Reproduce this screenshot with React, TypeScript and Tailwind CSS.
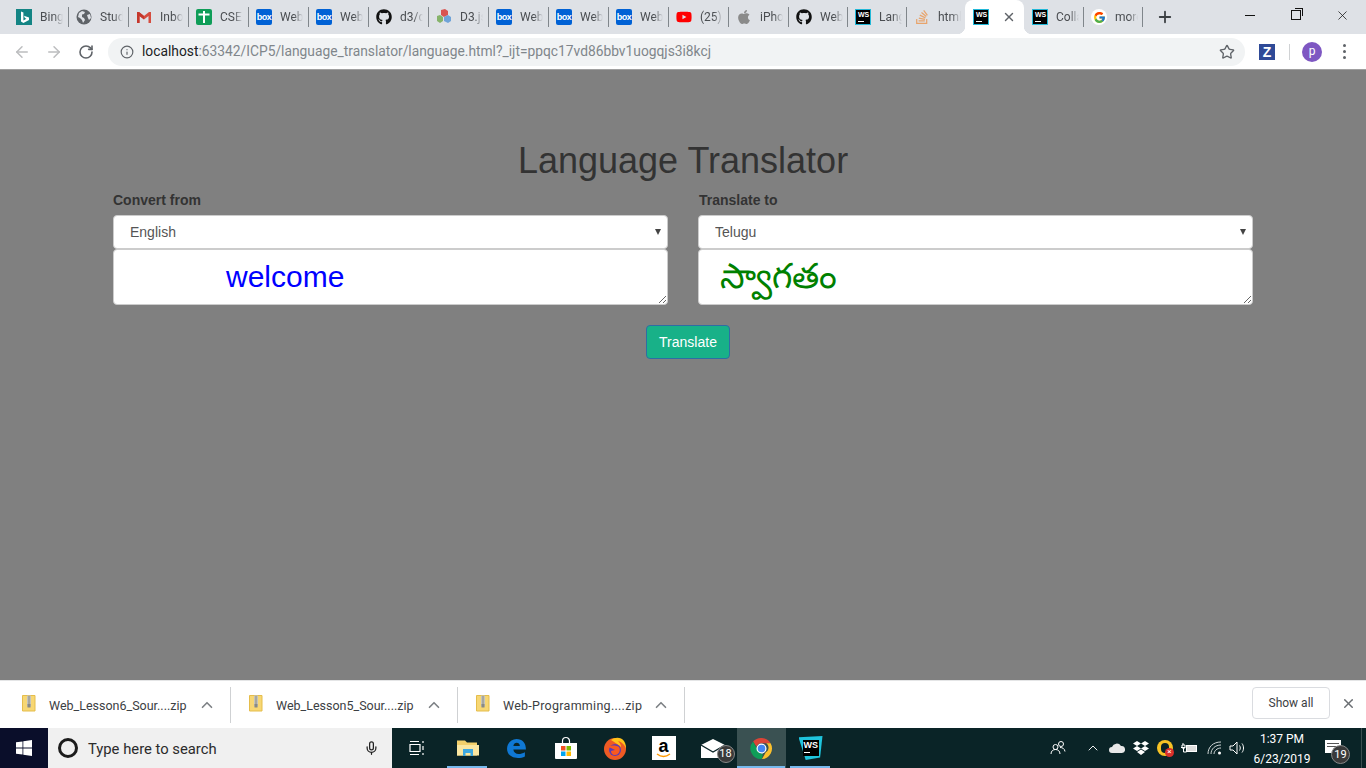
import React from "react";
import { ArrowLeft, ArrowRight, RotateCw, Info, Star, X, Plus, ChevronUp, Mic } from "lucide-react";
import { FaGithub, FaApple, FaStackOverflow, FaYoutube } from "react-icons/fa";
import { FcGoogle } from "react-icons/fc";

const Bing = () => (
  <div className="w-4 h-4 bg-[#138484] flex items-center justify-center">
    <svg viewBox="0 0 16 16" className="w-4 h-4"><path d="M5 2.500l2.400.9v8l3-1.700-1.500-.7-.9-2.300 5 1.700v2.600L7.400 14 5 12.600z" fill="#fff" /></svg>
  </div>
);
const Globe = () => (
  <svg viewBox="0 0 16 16" className="w-4 h-4"><circle cx="8" cy="8" r="7.500" fill="#5f6368" /><path d="M3 4l3-2 3 1-1 2-2 .5L6 8l2 1 1 2-2 3-1-3-2-2-2-1zM11 6l3-1 1 4-2 2-1-2z" fill="#dee1e6" /></svg>
);
const Gmail = () => (
  <svg viewBox="0 0 16 16" className="w-4 h-4"><path d="M1 3h2l5 4 5-4h2v11h-2.500V7L8 10.500 3.500 7v7H1z" fill="#d54c3f" /><path d="M3.500 7v7H1V3h2l5 4v3.500z" fill="#c5372c" /></svg>
);
const Sheet = () => (
  <svg viewBox="0 0 16 16" className="w-4 h-4"><rect width="16" height="16" rx="2" fill="#0f9d58" /><path d="M2.500 5.500h11M8 2v12" stroke="#fff" strokeWidth="2" /></svg>
);
const BoxIcon = () => (
  <div className="w-4 h-4 bg-[#0061d5] rounded-[2px] flex items-center justify-center text-white text-[9px] font-bold leading-none tracking-[-0.5px] font-['Liberation_Sans',sans-serif]">box</div>
);
const Cubes = () => (
  <svg viewBox="0 0 16 16" className="w-4 h-4"><path d="M5 1l4-1 3 2v4l-4 2-3-2z" fill="#d9534f" /><path d="M1 7l3-1 3 2v4l-3 2-3-2z" fill="#86b36a" /><path d="M8 8l4-2 3 2v4l-3 2-4-2z" fill="#6fa3d8" /></svg>
);
const WS = () => (
  <div className="w-4 h-4 bg-black border border-[#22b8d8] flex flex-col items-start pl-[2px] pt-[1px] text-white text-[7px] font-bold leading-[8px] font-['Liberation_Sans',sans-serif]">
    <span>WS</span>
    <div className="w-[6px] h-px bg-white mt-[2px]" />
  </div>
);

const tabs: { icon: React.ReactNode; label: string; w: string }[] = [
  { icon: <Bing />, label: "Bing", w: "w-[60px]" },
  { icon: <Globe />, label: "Study", w: "w-[60px]" },
  { icon: <Gmail />, label: "Inbox", w: "w-[60px]" },
  { icon: <Sheet />, label: "CSE", w: "w-[60px]" },
  { icon: <BoxIcon />, label: "Web", w: "w-[60px]" },
  { icon: <BoxIcon />, label: "Web", w: "w-[60px]" },
  { icon: <FaGithub className="w-4 h-4 text-[#111]" />, label: "d3/d3", w: "w-[60px]" },
  { icon: <Cubes />, label: "D3.js", w: "w-[60px]" },
  { icon: <BoxIcon />, label: "Web", w: "w-[60px]" },
  { icon: <BoxIcon />, label: "Web", w: "w-[60px]" },
  { icon: <BoxIcon />, label: "Web", w: "w-[60px]" },
  { icon: <FaYoutube className="w-4 h-4 text-[#f00]" />, label: "(25)", w: "w-[60px]" },
  { icon: <FaApple className="w-4 h-4 text-[#8a8a8a]" />, label: "iPhone", w: "w-[60px]" },
  { icon: <FaGithub className="w-4 h-4 text-[#111]" />, label: "Web", w: "w-[59px]" },
  { icon: <WS />, label: "Lang", w: "w-[59px]" },
];
const tabsAfter: { icon: React.ReactNode; label: string; sep: boolean }[] = [
  { icon: <WS />, label: "Collab", sep: true },
  { icon: <div className="w-4 h-4 rounded-full bg-white flex items-center justify-center"><FcGoogle className="w-[13px] h-[13px]" /></div>, label: "more", sep: true },
];

const Tab = ({ icon, label, w, sep = true }: { icon: React.ReactNode; label: string; w: string; sep?: boolean }) => (
  <div className={`${w} h-[34px] shrink-0 flex items-center pl-2 relative`}>
    <div className="w-4 h-4 shrink-0">{icon}</div>
    <div className="ml-2 w-[23px] overflow-hidden whitespace-nowrap text-[12px] text-[#4a4d51] [mask-image:linear-gradient(to_right,#000_60%,transparent)]">{label}</div>
    {sep && <div className="absolute -right-px top-[7px] h-[20px] w-px bg-[#80868b]" />}
  </div>
);

const Zip = () => (
  <svg viewBox="0 0 14 17" className="w-[14px] h-[17px]">
    <path d="M0.500 0.500h12.500v15.500H0.500z" fill="#f7d774" stroke="#e5bd4b" />
    <rect x="5" y="0.500" width="4" height="11" fill="#c4c4bc" />
    <path d="M6 2h2M6 4h2M6 6h2M6 8h2" stroke="#8a8a84" />
    <rect x="5.500" y="9" width="3" height="3.500" fill="#8a8a84" />
  </svg>
);

const Download = ({ name, wide = false }: { name: string; wide?: boolean }) => (
  <div className="w-[227px] h-[36px] flex items-center border-r border-[#cfd1d3] shrink-0">
    <div className="ml-[18px] -mt-[2px] w-[14px] h-[17px]"><Zip /></div>
    <div className={`ml-[13px] mt-[4px] text-[12.500px] text-[#3c4043] whitespace-nowrap ${wide ? "tracking-[0.27px]" : ""}`}>{name}</div>
    <ChevronUp className="ml-auto mr-[14px] w-[18px] h-[18px] text-[#7d8185]" strokeWidth={2.2} />
  </div>
);

const Cell = ({ children, active = false, bar = false }: { children: React.ReactNode; active?: boolean; bar?: boolean }) => (
  <div className={`w-[49px] h-10 shrink-0 flex items-center justify-center relative ${active ? "bg-[#3a5152]" : ""}`}>
    {children}
    {bar && <div className={`absolute bottom-0 h-[2px] bg-[#76b9ed] ${active ? "left-0 right-px" : "left-[4px] right-[5px]"}`} />}
  </div>
);

const Select = ({ value }: { value: string }) => (
  <div className="relative">
    <select defaultValue={value} className="appearance-none block w-full h-[34px] bg-white border border-[#cccccc] rounded-[4px] pl-4 pr-4 text-[14px] text-[#555555] outline-none">
      <option>{value}</option>
    </select>
    <div className="absolute right-[7px] top-[14px] w-0 h-0 border-l-[3px] border-r-[3px] border-t-[6px] border-l-transparent border-r-transparent border-t-[#444444] pointer-events-none" />
  </div>
);

export default function App() {
  return (
    <div className="w-[1366px] h-[768px] overflow-hidden flex flex-col font-['Liberation_Sans',Arial,sans-serif] bg-[#808080]">
      {/* tab strip */}
      <div className="h-[34px] shrink-0 bg-[#dee1e6] flex items-start pl-2 font-['Roboto',sans-serif]">
        {tabs.map((t, i) => (
          <Tab key={i} icon={t.icon} label={t.label} w={t.w} />
        ))}
        <Tab icon={<FaStackOverflow className="w-4 h-4 text-[#e8a46c]" />} label="html" w="w-[59px]" sep={false} />
        <div className="w-[59px] h-[34px] shrink-0 bg-white rounded-t-[8px] flex items-center pl-2 justify-between pr-2 relative before:content-[''] before:absolute before:-left-2 before:bottom-0 before:w-2 before:h-2 before:bg-[radial-gradient(circle_at_0_0,transparent_8px,#fff_8.500px)] after:content-[''] after:absolute after:-right-2 after:bottom-0 after:w-2 after:h-2 after:bg-[radial-gradient(circle_at_100%_0,transparent_8px,#fff_8.500px)]">
          <div className="w-4 h-4"><WS /></div>
          <X className="w-[14px] h-[14px] text-[#5f6368]" strokeWidth={2.4} />
        </div>
        {tabsAfter.map((t, i) => (
          <Tab key={i} icon={t.icon} label={t.label} w="w-[59px]" sep={t.sep} />
        ))}
        <Plus className="ml-[14px] mt-[8px] w-[18px] h-[18px] text-[#3c4043]" strokeWidth={2.4} />
        <div className="ml-auto mr-px flex items-start h-[30px] text-[#222]">
          <div className="w-[46px] h-[30px] flex items-center justify-center"><div className="w-[10px] h-px bg-[#111]" /></div>
          <div className="w-[46px] h-[30px] flex items-center justify-center">
            <div className="w-[10px] h-[10px] border border-[#111] relative bg-[#dee1e6] before:content-[''] before:absolute before:w-[8px] before:h-[8px] before:border-t before:border-r before:border-[#111] before:-top-[3px] before:-right-[3px]" />
          </div>
          <div className="w-[46px] h-[30px] flex items-center justify-center"><X className="w-[15px] h-[15px] text-[#111]" strokeWidth={1.2} /></div>
        </div>
      </div>
      {/* toolbar */}
      <div className="h-[36px] shrink-0 bg-white border-b border-[#a0a0a0] flex items-center font-['Roboto',sans-serif]">
        <ArrowLeft className="ml-[13px] w-[18px] h-[18px] text-[#bcbdbf]" strokeWidth={2} />
        <ArrowRight className="ml-[14px] w-[18px] h-[18px] text-[#bcbdbf]" strokeWidth={2} />
        <RotateCw className="ml-[15px] w-[16px] h-[16px] text-[#5f6368]" strokeWidth={2.4} />
        <div className="ml-[14px] w-[1137px] h-[28px] rounded-full bg-[#f1f3f4] flex items-center pl-3 pr-[10px]">
          <Info className="w-[14px] h-[14px] text-[#5f6368]" strokeWidth={2} />
          <div className="ml-2 text-[13.800px] whitespace-nowrap text-[#80868b]"><span className="text-[#202124]">localhost</span>:63342/ICP5/language_translator/language.html?_ijt=ppqc17vd86bbv1uogqjs3i8kcj</div>
          <Star className="ml-auto w-4 h-4 text-[#5f6368]" strokeWidth={2} />
        </div>
        <div className="ml-[14px] w-4 h-4 bg-[#2f4a97] text-white text-[14px] font-bold leading-4 text-center font-['Liberation_Sans',sans-serif]">Z</div>
        <div className="ml-[14px] w-px h-4 bg-[#d0d2d4]" />
        <div className="ml-[12px] w-5 h-5 rounded-full bg-[#7e57c2] text-white text-[12px] leading-[19px] text-center">p</div>
        <div className="ml-[21px] flex flex-col gap-[3px]">
          <div className="w-[3px] h-[3px] rounded-full bg-[#5f6368]" />
          <div className="w-[3px] h-[3px] rounded-full bg-[#5f6368]" />
          <div className="w-[3px] h-[3px] rounded-full bg-[#5f6368]" />
        </div>
      </div>
      {/* page */}
      <main className="flex-1 bg-[#808080] text-[#333333] overflow-hidden">
        <h1 className="mt-[71px] text-center text-[36px] leading-[40px] font-normal">Language Translator</h1>
        <div className="mt-[9px] w-[1170px] mx-auto grid grid-cols-2">
          <div className="px-[15px]">
            <label className="block text-[14px] font-bold leading-[20px] mb-[5px]">Convert from</label>
            <Select value="English" />
            <textarea readOnly defaultValue="welcome" className="block w-full h-[56px] bg-white border border-[#cccccc] rounded-[4px] pl-[112px] pt-[9px] text-[30px] leading-[36px] text-[#0000ff] outline-none" />
          </div>
          <div className="px-[15px]">
            <label className="block pl-px text-[14px] font-bold leading-[20px] mb-[5px]">Translate to</label>
            <Select value="Telugu" />
            <textarea readOnly defaultValue="స్వాగతం" className="block w-full h-[56px] bg-white border border-[#cccccc] rounded-[4px] pl-[21px] pt-[6px] text-[35px] leading-[40px] text-[#008000] outline-none" />
          </div>
        </div>
        <div className="mt-[20px] pl-[646px]">
          <button className="w-[84px] h-[34px] bg-[#18b188] border border-[#2e6da4] rounded-[4px] text-white text-[14px]">Translate</button>
        </div>
      </main>
      {/* downloads */}
      <div className="h-[48px] shrink-0 bg-white border-t border-[#e4e5e6] flex items-center pl-[4px] font-['Roboto',sans-serif]">
        <Download name="Web_Lesson6_Sour....zip" />
        <Download name="Web_Lesson5_Sour....zip" />
        <Download name="Web-Programming....zip" wide />
        <div className="ml-auto mr-[10px] -mt-[3px] flex items-center">
          <div className="w-[78px] h-[32px] border border-[#dadce0] rounded-[4px] text-[12px] text-[#3c4043] flex items-center justify-center">Show all</div>
          <X className="ml-[11px] w-[15px] h-[15px] text-[#6a6e72]" strokeWidth={2.4} />
        </div>
      </div>
      {/* taskbar */}
      <div className="h-10 shrink-0 bg-[#0a2427] flex items-center text-white font-['Roboto',sans-serif]">
        <div className="w-12 h-10 bg-[#0a0e2a] flex items-center justify-center">
          <svg viewBox="0 0 16 16" className="w-4 h-4"><path d="M0 2.300l6.500-.9v6.200H0zM7.300 1.300L16 0v7.600H7.300zM0 8.400h6.500v6.200L0 13.700zM7.300 8.400H16V16l-8.700-1.300z" fill="#fff" /></svg>
        </div>
        <div className="w-[344px] h-10 bg-[#f0f0f0] flex items-center pl-[10px] pr-[13px] text-[#2b2b2b]">
          <div className="w-[20px] h-[20px] rounded-full border-[3px] border-[#1c1c1c]" />
          <span className="ml-[10px] mt-[2px] text-[14.800px]">Type here to search</span>
          <Mic className="ml-auto w-[15px] h-[18px] text-[#222]" strokeWidth={2} />
        </div>
        <div className="mr-[2px]">
          <Cell>
            <svg viewBox="0 0 16 16" className="w-4 h-4" fill="none" stroke="#fff" strokeWidth="1.200"><path d="M1 1.500h9M1 14.500h9M1 4.500h10v7H1zM14 1v2M14 6v4M14 13v2" /></svg>
          </Cell>
        </div>
        <Cell bar>
          <svg viewBox="0 0 22 18" className="w-[22px] h-[18px]"><path d="M0 1.500h8l2 2h10v13H0z" fill="#f3d06b" /><path d="M0 6h22v10.500H0z" fill="#fbe7a1" /><path d="M6 10h10v7h-2.500v-3h-5v3H6z" fill="#3fa9e0" /></svg>
        </Cell>
        <Cell>
          <svg viewBox="0 0 20 20" className="w-[21px] h-[21px]"><path d="M10 1c5.500 0 9 3.700 9 10H7c.3 2.800 2.300 4.300 5 4.300 2 0 4-.6 6-1.700v4c-2 1.100-4.300 1.500-6.600 1.500C5.400 19.100 1 15.700 1 10.200 1 5 5 1 10 1zm-3 6.500h6.200c-.1-2-1.400-3-3-3S7.400 5.500 7 7.500z" fill="#0f78d4" /></svg>
        </Cell>
        <Cell>
          <svg viewBox="0 0 24 24" className="w-[24px] h-[24px]"><path d="M8.500 7V5a3.500 3.500 0 017 0v2" fill="none" stroke="#fff" strokeWidth="1.200" /><path d="M1 7h22v15a1 1 0 01-1 1H2a1 1 0 01-1-1z" fill="#fff" /><rect x="7" y="10" width="4.500" height="4.500" fill="#f25022" /><rect x="12.500" y="10" width="4.500" height="4.500" fill="#7fba00" /><rect x="7" y="15.500" width="4.500" height="4.500" fill="#00a4ef" /><rect x="12.500" y="15.500" width="4.500" height="4.500" fill="#ffb900" /></svg>
        </Cell>
        <Cell>
          <svg viewBox="0 0 24 24" className="w-[24px] h-[24px]"><circle cx="12" cy="13" r="11" fill="#ee5a24" /><path d="M8 4c4-3 10-3 13 1 2 3 2 6 2 8-1-4-4-7-8-8 2 2 3 4 3 6-3-3-7-5-10-7z" fill="#ffc21a" /><circle cx="12" cy="14" r="6" fill="#5b3bb5" /><path d="M5 11c3-2 8-2 11 0 2 3 0 8-4 8-3 0-4-2-4-4l4-1-4-2z" fill="#f9591f" /></svg>
        </Cell>
        <Cell>
          <div className="w-6 h-6 bg-white relative flex items-start justify-center text-black text-[18px] font-bold leading-[20px] font-['Liberation_Sans',sans-serif]">
            a
            <svg viewBox="0 0 16 5" className="absolute left-[4px] bottom-[2px] w-4 h-[5px]"><path d="M1 1c4 3 9 3 13 0" fill="none" stroke="#f90" strokeWidth="1.400" /></svg>
          </div>
        </Cell>
        <Cell>
          <div className="relative w-[24px] h-[20px]">
            <svg viewBox="0 0 24 20" className="w-[24px] h-[20px]"><path d="M0 7l12-6 12 6v13H0z" fill="#fff" /><path d="M0 7l12 7 12-7" fill="none" stroke="#0a2427" strokeWidth="1.200" /></svg>
            <div className="absolute -right-[10px] top-[7px] w-[18px] h-[18px] rounded-full bg-[#3a3a3a] border border-[#888] text-white text-[11px] leading-[16px] text-center">18</div>
          </div>
        </Cell>
        <Cell active bar>
          <svg viewBox="0 0 24 24" className="w-[23px] h-[23px]">
            <path d="M12 1a11 11 0 019.500 5.500H12a5.500 5.500 0 00-5.200 3.600L3.200 4.800A11 11 0 0112 1z" fill="#db4437" />
            <path d="M21.500 6.500A11 11 0 0112.500 23l4-7a5.500 5.500 0 00.3-9.500z" fill="#fbc02d" />
            <path d="M3.200 4.800l4.400 7.600a5.500 5.500 0 005.800 5l-1 5.600A11 11 0 013.200 4.800z" fill="#0f9d58" />
            <circle cx="12" cy="12" r="4.600" fill="#4285f4" stroke="#fff" strokeWidth="1.300" />
          </svg>
        </Cell>
        <Cell bar>
          <div className="relative w-[24px] h-[24px]">
            <div className="absolute inset-0 bg-[#1fc4dd] [clip-path:polygon(0_5%,100%_0,90%_90%,30%_100%)]" />
            <div className="absolute left-[4px] top-[4px] w-[16px] h-[16px] bg-black text-white text-[9px] font-bold leading-[10px] pl-[1px] font-['Liberation_Sans',sans-serif]">WS<div className="w-[6px] h-px bg-white mt-[2px]" /></div>
          </div>
        </Cell>
        <div className="ml-auto flex items-center h-10">
          <svg viewBox="0 0 16 16" className="w-4 h-4 mr-[19px]" fill="none" stroke="#fff" strokeWidth="1"><circle cx="5.500" cy="7" r="2.500" /><circle cx="11" cy="4" r="2.500" /><path d="M1 14c0-3 2-4.500 4.500-4.500S10 11 10 14M10 7.500c2.500 0 4.500 1 5 4" /></svg>
          <ChevronUp className="w-[16px] h-[16px] mr-[8px] text-white" strokeWidth={1.400} />
          <svg viewBox="0 0 16 10" className="w-4 h-[10px] mr-[8px]"><path d="M3 10a3 3 0 010-6 5 5 0 019-1 3.500 3.500 0 011 7z" fill="#e8e8e8" /></svg>
          <svg viewBox="0 0 16 15" className="w-4 h-[15px] mr-[8px]"><path d="M4 0l4 2.500L4 5 0 2.500zM12 0l4 2.500L12 5 8 2.500zM4 5l4 2.500L4 10 0 7.500zM12 5l4 2.500-4 2.500-4-2.500zM4 11l4-2.500 4 2.500-4 3z" fill="#fff" /></svg>
          <div className="relative w-4 h-4 mr-[8px] rounded-full bg-[#f7c325]">
            <div className="absolute left-[4px] top-[3px] w-[8px] h-[10px] bg-[#0a2427] rounded-full" />
            <div className="absolute -right-[1px] -bottom-[1px] w-[9px] h-[9px] rounded-full bg-[#d9302b] text-white text-[8px] leading-[8px] text-center">×</div>
          </div>
          <svg viewBox="0 0 16 12" className="w-4 h-3 mr-[10px]" fill="none" stroke="#fff"><rect x="5.500" y="3.500" width="10" height="6" fill="#ddd" /><path d="M0 5.500h4M2 1v2M1 3h3v3H1zM2.500 6v4h3" /></svg>
          <svg viewBox="0 0 15 14" className="w-[15px] h-[14px] mr-[7px]" fill="none" stroke="#cfd6d6" strokeWidth="1"><path d="M1 13C1 6 6 1 14 1M4 13c0-5 4-9 10-9M7 13c0-3 3-6 7-6" /><circle cx="12.500" cy="12" r="1.500" fill="#fff" stroke="none" /></svg>
          <svg viewBox="0 0 16 14" className="w-4 h-[14px] mr-[3px]" fill="none" stroke="#fff" strokeWidth="1"><path d="M1 5h3l4-4v12l-4-4H1zM10.500 4.500c1 1.500 1 3.500 0 5M13 2.500c2 2.500 2 6.500 0 9" /></svg>
          <div className="w-[68px] mt-[2px] text-center text-[12px] leading-[20px] text-white">
            <div>1:37 PM</div>
            <div>6/23/2019</div>
          </div>
          <div className="relative w-4 h-[13px] ml-[9px] mr-[20px] bg-white -mt-[4px]">
            <div className="absolute left-[2px] top-[3px] w-[12px] h-px bg-[#555]" />
            <div className="absolute left-[2px] top-[6px] w-[12px] h-px bg-[#555]" />
            <div className="absolute left-[6px] top-[5px] w-[19px] h-[19px] rounded-full bg-[#3a3a3a] border border-[#888] text-white text-[11px] leading-[17px] text-center">19</div>
          </div>
          <div className="w-px h-10 bg-[#3a4f50] mr-[4px]" />
        </div>
      </div>
    </div>
  );
}
